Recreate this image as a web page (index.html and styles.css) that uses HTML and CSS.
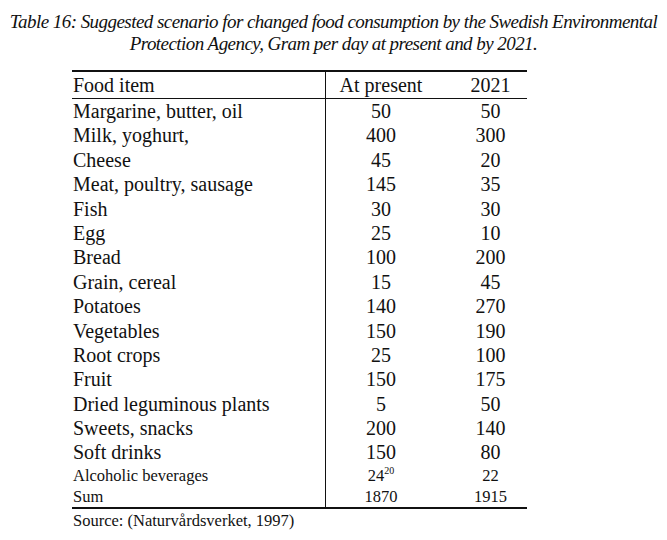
FILE: index.html
```html
<!DOCTYPE html>
<html>
<head>
<meta charset="utf-8">
<link rel="stylesheet" href="styles.css">
</head>
<body>
<div class="caption">
  <div>Table 16: Suggested scenario for changed food consumption by the Swedish Environmental</div>
  <div>Protection Agency, Gram per day at present and by 2021.</div>
</div>
<div class="table">
  <div class="row head"><div class="c1">Food item</div><div class="c2">At present</div><div class="c3">2021</div></div>
  <div class="row"><div class="c1">Margarine, butter, oil</div><div class="c2">50</div><div class="c3">50</div></div>
  <div class="row"><div class="c1">Milk, yoghurt,</div><div class="c2">400</div><div class="c3">300</div></div>
  <div class="row"><div class="c1">Cheese</div><div class="c2">45</div><div class="c3">20</div></div>
  <div class="row"><div class="c1">Meat, poultry, sausage</div><div class="c2">145</div><div class="c3">35</div></div>
  <div class="row"><div class="c1">Fish</div><div class="c2">30</div><div class="c3">30</div></div>
  <div class="row"><div class="c1">Egg</div><div class="c2">25</div><div class="c3">10</div></div>
  <div class="row"><div class="c1">Bread</div><div class="c2">100</div><div class="c3">200</div></div>
  <div class="row"><div class="c1">Grain, cereal</div><div class="c2">15</div><div class="c3">45</div></div>
  <div class="row"><div class="c1">Potatoes</div><div class="c2">140</div><div class="c3">270</div></div>
  <div class="row"><div class="c1">Vegetables</div><div class="c2">150</div><div class="c3">190</div></div>
  <div class="row"><div class="c1">Root crops</div><div class="c2">25</div><div class="c3">100</div></div>
  <div class="row"><div class="c1">Fruit</div><div class="c2">150</div><div class="c3">175</div></div>
  <div class="row"><div class="c1">Dried leguminous plants</div><div class="c2">5</div><div class="c3">50</div></div>
  <div class="row"><div class="c1">Sweets, snacks</div><div class="c2">200</div><div class="c3">140</div></div>
  <div class="row"><div class="c1">Soft drinks</div><div class="c2">150</div><div class="c3">80</div></div>
  <div class="row small"><div class="c1">Alcoholic beverages</div><div class="c2">24<sup>20</sup></div><div class="c3">22</div></div>
  <div class="row small last"><div class="c1">Sum</div><div class="c2">1870</div><div class="c3">1915</div></div>
</div>
<div class="source">Source: (Naturvårdsverket, 1997)</div>
</body>
</html>
```
FILE: styles.css
```css
html, body {
  margin: 0;
  padding: 0;
  background: #ffffff;
  color: #111111;
  font-family: "Liberation Serif", "Times New Roman", serif;
}
.caption {
  padding-top: 11px;
  text-align: center;
  font-style: italic;
  font-size: 19px;
  letter-spacing: -0.55px;
  line-height: 22px;
}
.table {
  margin-top: 15px;
  margin-left: 72px;
  width: 455px;
  border-top: 2px solid #111;
  border-bottom: 2px solid #111;
}
.row {
  display: grid;
  grid-template-columns: 254px 110px 91px;
  font-size: 20px;
  height: 24.4px;
  line-height: 24.4px;
}
.row.head {
  height: 26px;
  line-height: 26px;
  border-bottom: 1px solid #111;
}
.c1 {
  border-right: 1px solid #111;
  padding-left: 1px;
  white-space: nowrap;
}
.c2 {
  text-align: center;
}
.c3 {
  text-align: center;
  padding-left: 18px;
}
.row.small {
  font-size: 16.5px;
  height: 21px;
  line-height: 21px;
}
.row.small.last {
  line-height: 22px;
}
sup {
  font-size: 10px;
  line-height: 0;
  vertical-align: 7px;
}
.source {
  margin-left: 73px;
  margin-top: 1px;
  font-size: 16.5px;
  line-height: 22px;
}
```
